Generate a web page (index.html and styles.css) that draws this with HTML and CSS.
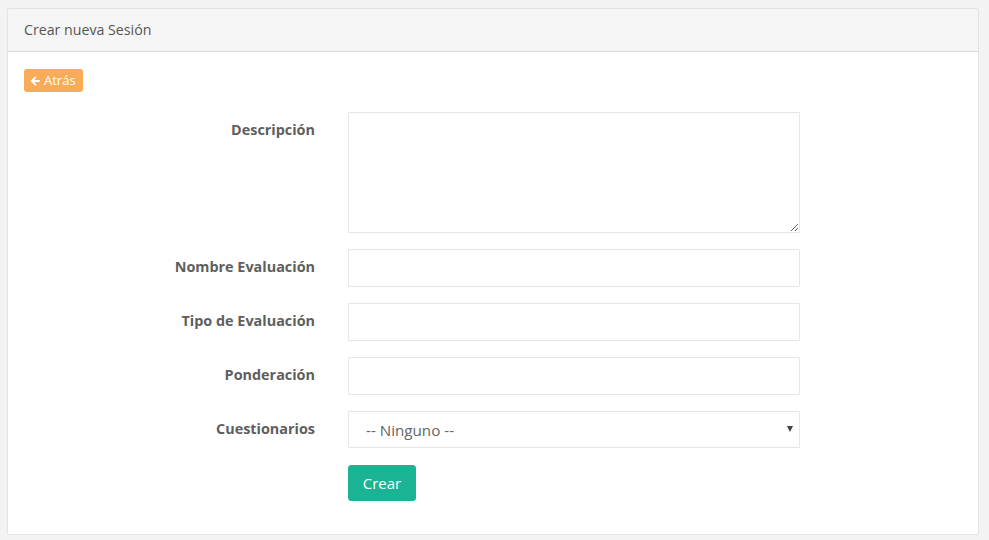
FILE: index.html
```html
<!DOCTYPE html>
<html lang="es">
<head>
<meta charset="utf-8">
<title>Crear nueva Sesión</title>
<link rel="stylesheet" href="styles.css">
</head>
<body>
<div class="panel">
  <div class="panel-heading">Crear nueva Sesión</div>
  <div class="panel-body">
    <a class="btn-back" href="#"><svg class="arrow" viewBox="0 0 12 12" width="12" height="12"><path d="M6.2 1.2 L1.4 6 L6.2 10.8 L7.6 9.4 L5.2 7 H10.8 V5 H5.2 L7.6 2.6 Z" fill="#fff"/></svg>Atrás</a>
    <form class="form">
      <div class="row">
        <label class="label">Descripción</label>
        <textarea class="control textarea"></textarea>
      </div>
      <div class="row">
        <label class="label">Nombre Evaluación</label>
        <input class="control" type="text">
      </div>
      <div class="row">
        <label class="label">Tipo de Evaluación</label>
        <input class="control" type="text">
      </div>
      <div class="row">
        <label class="label">Ponderación</label>
        <input class="control" type="text">
      </div>
      <div class="row">
        <label class="label">Cuestionarios</label>
        <div class="select-wrap">
          <select class="control select"><option>-- Ninguno --</option></select>
          <span class="caret"></span>
        </div>
      </div>
      <div class="row">
        <span></span>
        <div><button class="btn-create" type="button">Crear</button></div>
      </div>
    </form>
  </div>
</div>
</body>
</html>
```

FILE: styles.css
```css
* { box-sizing: border-box; }
html, body { margin: 0; }
body {
  background: #f3f3f4;
  font-family: "Open Sans", "Liberation Sans", sans-serif;
  font-size: 14px;
  color: #676a6c;
  padding: 8px 10px 5px 7px;
}
.panel {
  background: #fff;
  border: 1px solid #e1e3e5;
  border-radius: 2px;
}
.panel-heading {
  background: #f5f5f5;
  border-bottom: 1px solid #dcdcdc;
  padding: 11px 16px 11px 16px;
  line-height: 20px;
  font-size: 14.2px;
  color: #555;
}
.panel-body {
  padding: 17px 16px 33px 16px;
}
.btn-back {
  display: inline-flex;
  align-items: center;
  gap: 3px;
  background: #f8ac59;
  color: #fff;
  text-decoration: none;
  font-size: 13px;
  line-height: 17px;
  padding: 3px 7px 3px 5px;
  border-radius: 3px;
  height: 23px;
}
.arrow { display: block; }
.form {
  margin-top: 20px;
  display: flex;
  flex-direction: column;
  gap: 16px;
}
.row {
  display: grid;
  grid-template-columns: 291px 452px;
  column-gap: 33px;
  align-items: start;
}
.label {
  text-align: right;
  font-weight: 700;
  font-size: 14.4px;
  color: #5e5e5e;
  line-height: 20px;
  padding-top: 8px;
}
.control {
  display: block;
  width: 452px;
  height: 38px;
  border: 1px solid #e5e6e7;
  border-radius: 1px;
  background: #fff;
  font-family: inherit;
  font-size: 15px;
  color: #676a6c;
  padding: 6px 12px;
  outline: none;
  margin: 0;
}
.textarea {
  height: 121px;
  resize: vertical;
}
.select-wrap { position: relative; width: 452px; }
.select {
  appearance: none;
  -webkit-appearance: none;
  height: 37px;
  padding-left: 17px;
  font-size: 15.2px;
  color: #666;
}
.caret {
  position: absolute;
  right: 7px;
  top: 15px;
  width: 0;
  height: 0;
  border-left: 3px solid transparent;
  border-right: 3px solid transparent;
  border-top: 6px solid #444;
  pointer-events: none;
}
.btn-create {
  background: #1ab394;
  border: 1px solid #1ab394;
  color: #fff;
  font-family: inherit;
  font-size: 15px;
  line-height: 20px;
  height: 36px;
  width: 68px;
  padding: 0 0 1px;
  border-radius: 3px;
  margin-top: 1px;
}
```
